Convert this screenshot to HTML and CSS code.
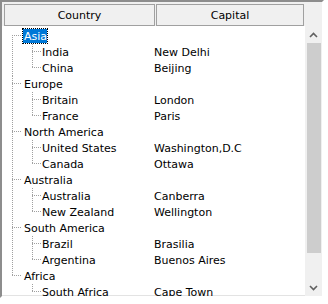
FILE: index.html
```html
<!DOCTYPE html>
<html lang="en">
	<head>
		<meta charset="UTF-8" />
		<meta name="viewport" content="initial-scale=1,width=device-width" />
		<title>Tree List</title>
		<link rel="stylesheet" href="styles.css">
	</head>

	<body>
		<div class="tree-list">
			<div class="tree-header">
				<div class="header-cell header-cell_country">Country</div>
				<div class="header-cell header-cell_capital">Capital</div>
			</div>
			<div class="tree-body">
				<ul class="tree">
					<li class="node">
						<div class="row"><span class="name"><span class="label label_selected">Asia</span></span></div>
						<ul class="children">
							<li class="leaf"><span class="name">India</span><span class="capital">New Delhi</span></li>
							<li class="leaf"><span class="name">China</span><span class="capital">Beijing</span></li>
						</ul>
					</li>
					<li class="node">
						<div class="row"><span class="name"><span class="label">Europe</span></span></div>
						<ul class="children">
							<li class="leaf"><span class="name">Britain</span><span class="capital">London</span></li>
							<li class="leaf"><span class="name">France</span><span class="capital">Paris</span></li>
						</ul>
					</li>
					<li class="node">
						<div class="row"><span class="name"><span class="label">North America</span></span></div>
						<ul class="children">
							<li class="leaf"><span class="name">United States</span><span class="capital">Washington,D.C</span></li>
							<li class="leaf"><span class="name">Canada</span><span class="capital">Ottawa</span></li>
						</ul>
					</li>
					<li class="node">
						<div class="row"><span class="name"><span class="label">Australia</span></span></div>
						<ul class="children">
							<li class="leaf"><span class="name">Australia</span><span class="capital">Canberra</span></li>
							<li class="leaf"><span class="name">New Zealand</span><span class="capital">Wellington</span></li>
						</ul>
					</li>
					<li class="node">
						<div class="row"><span class="name"><span class="label">South America</span></span></div>
						<ul class="children">
							<li class="leaf"><span class="name">Brazil</span><span class="capital">Brasilia</span></li>
							<li class="leaf"><span class="name">Argentina</span><span class="capital">Buenos Aires</span></li>
						</ul>
					</li>
					<li class="node">
						<div class="row"><span class="name"><span class="label">Africa</span></span></div>
						<ul class="children">
							<li class="leaf"><span class="name">South Africa</span><span class="capital">Cape Town</span></li>
						</ul>
					</li>
				</ul>
				<div class="scrollbar">
					<div class="scroll-button">
						<svg width="9" height="6" viewBox="0 0 9 6"><polyline points="1,5 4.5,1.5 8,5" fill="none" stroke="#606060" stroke-width="1.6" /></svg>
					</div>
					<div class="scroll-track">
						<div class="scroll-thumb"></div>
					</div>
					<div class="scroll-button">
						<svg width="9" height="6" viewBox="0 0 9 6"><polyline points="1,1 4.5,4.5 8,1" fill="none" stroke="#606060" stroke-width="1.6" /></svg>
					</div>
				</div>
			</div>
		</div>
	</body>
</html>
```

FILE: styles.css
```css
html {
	box-sizing: border-box;
}

*,
*::after,
*::before {
	box-sizing: inherit;
}

body {
	margin: 0;
	padding: 0;
	background-color: #fff;
	font-family: "DejaVu Sans", sans-serif;
	font-size: 11px;
	color: #000;
}

.tree-list {
	display: flex;
	flex-direction: column;
	width: 324px;
	height: 298px;
	border-style: solid;
	border-width: 2px;
	border-color: #8d8d8d #fff #fff #8d8d8d;
	box-shadow: inset -1px -1px 0 #e3e3e3;
}

.tree-header {
	display: flex;
	height: 24px;
	padding: 2px 0 0 2px;
	background-color: #f0f0f0;
	gap: 1px;
}

.header-cell {
	height: 22px;
	border: 1px solid #a0a0a0;
	background-color: #f0f0f0;
	text-align: center;
	line-height: 21px;
}

.header-cell_country {
	width: 151px;
}

.header-cell_capital {
	width: 148px;
}

.tree-body {
	display: flex;
	flex: 1;
	min-height: 0;
}

.tree {
	flex: 1;
	margin: 0;
	padding: 2px 0 0;
	list-style: none;
	overflow: hidden;
}

.children {
	margin: 0;
	padding: 0;
	list-style: none;
}

.node {
	background:
		repeating-linear-gradient(to bottom, #a0a0a0 0 1px, transparent 1px 2px) 10px 0 / 1px 100% no-repeat,
		repeating-linear-gradient(to right, #a0a0a0 0 1px, transparent 1px 2px) 10px 7px / 10px 1px no-repeat;
}

.node:first-child {
	background-position: 10px 7px, 10px 7px;
}

.node:last-child {
	background-size: 1px 8px, 10px 1px;
}

.row,
.leaf {
	display: flex;
	height: 16px;
	line-height: 17px;
	white-space: nowrap;
}

.leaf {
	background:
		repeating-linear-gradient(to bottom, #a0a0a0 0 1px, transparent 1px 2px) 30px 0 / 1px 100% no-repeat,
		repeating-linear-gradient(to right, #a0a0a0 0 1px, transparent 1px 2px) 30px 7px / 10px 1px no-repeat;
}

.leaf:last-child {
	background-size: 1px 8px, 10px 1px;
}

.name {
	width: 152px;
	padding-left: 20px;
}

.leaf .name {
	padding-left: 40px;
}

.label {
	display: inline-block;
	height: 16px;
	padding: 0 0 0 1px;
	border: 1px solid transparent;
	line-height: 15px;
}

.label_selected {
	border: 1px dotted #000;
	background-color: #0078d7;
	background-clip: padding-box;
	color: #fff;
}

.scrollbar {
	display: flex;
	flex-direction: column;
	width: 17px;
	background-color: #f0f0f0;
}

.scroll-button {
	display: flex;
	align-items: center;
	justify-content: center;
	height: 17px;
}

.scroll-track {
	flex: 1;
	padding: 0 1px 0 2px;
}

.scroll-thumb {
	height: 210px;
	background-color: #cdcdcd;
}
```
